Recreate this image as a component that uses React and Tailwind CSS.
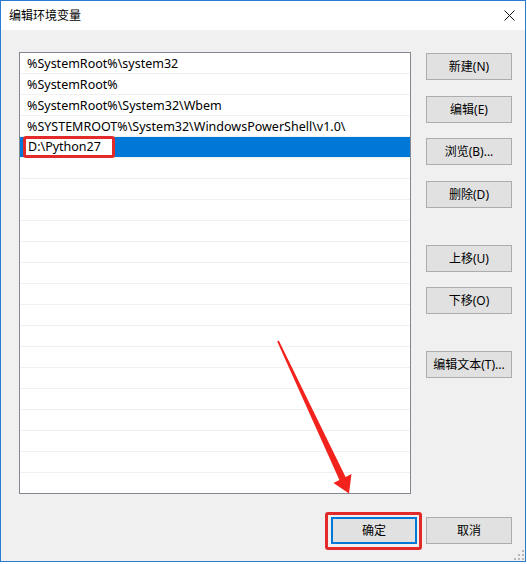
import React from 'react';

const paths = [
  '%SystemRoot%\\system32',
  '%SystemRoot%',
  '%SystemRoot%\\System32\\Wbem',
  '%SYSTEMROOT%\\System32\\WindowsPowerShell\\v1.0\\',
];

const sideButtons = [
  { label: '新建(N)', mt: 'mt-[1px]' },
  { label: '编辑(E)', mt: 'mt-[16px]' },
  { label: '浏览(B)...', mt: 'mt-[15px]' },
  { label: '删除(D)', mt: 'mt-[16px]' },
  { label: '上移(U)', mt: 'mt-[37px]' },
  { label: '下移(O)', mt: 'mt-[15px]' },
  { label: '编辑文本(T)...', mt: 'mt-[37px]' },
];

const WinButton = ({ children, className = '' }) => (
  <button className={`w-[86px] h-[27px] border border-[#adadad] bg-[#e1e1e1] text-[12px] text-black flex items-center justify-center ${className}`}>
    {children}
  </button>
);

const App = () => {
  // 21 rows fill the list box, the rest are empty
  const empty = Array.from({ length: 17 });

  return (
    <div
      className="w-[527px] h-[564px] bg-white overflow-hidden relative"
      style={{ fontFamily: '"Noto Sans", "Noto Sans CJK SC", sans-serif' }}
    >
      <div className="w-[526px] h-[562px] border border-[#2b7bd0] flex flex-col">
        {/* title bar */}
        <div className="h-[29px] bg-white flex items-center justify-between pl-[8px] pr-[10px] shrink-0">
          <span className="text-[12px] text-black">编辑环境变量</span>
          <svg width="11" height="11" viewBox="0 0 11 11" className="mt-[-1px]">
            <path d="M0.5 0.5 L10.5 10.5 M10.5 0.5 L0.5 10.5" stroke="#111" strokeWidth="1" />
          </svg>
        </div>

        {/* body */}
        <div className="flex-1 bg-[#f0f0f0] pt-[22px] pl-[18px] pr-[13px] relative">
          <div className="flex gap-[15px]">
            <div className="w-[392px] h-[442px] border border-[#828790] bg-white overflow-hidden">
              {paths.map((p) => (
                <div key={p} className="h-[21px] border-b border-[#f0f0f0] flex items-center pl-[7px] pt-[2px] text-[12.5px] text-black">
                  {p}
                </div>
              ))}
              <div className="h-[21px] border-b border-[#f0f0f0] bg-[#0078d7] flex items-center">
                <div className="ml-[3px] w-[92px] h-[22px] mt-[-1px] bg-white border-[3px] border-[#e32a2a] rounded-[3px] flex items-center pl-[2px] pt-[2px] text-[12.5px] text-black">
                  D:\Python27
                </div>
              </div>
              {empty.map((_, i) => (
                <div key={i} className="h-[21px] border-b border-[#f0f0f0]" />
              ))}
            </div>

            <div className="flex flex-col">
              {sideButtons.map((b) => (
                <WinButton key={b.label} className={b.mt}>
                  {b.label}
                </WinButton>
              ))}
            </div>
          </div>

          <div className="flex justify-end gap-[9px] mt-[23px]">
            <div className="relative">
              <button className="w-[86px] h-[27px] border-2 border-[#0078d7] bg-[#e1e1e1] text-[12px] text-black flex items-center justify-center">
                确定
              </button>
              <span className="absolute left-[-6px] right-[-5px] top-[-5px] bottom-[-6px] border-[3px] border-[#e32a2a] rounded-[3px] pointer-events-none" />
            </div>
            <WinButton>取消</WinButton>
          </div>

          {/* resize grip */}
          <svg className="absolute right-[1px] bottom-[1px]" width="10" height="10" viewBox="0 0 10 10">
            <g fill="#b8b8b8">
              <rect x="8" y="0" width="2" height="2" />
              <rect x="4" y="4" width="2" height="2" />
              <rect x="8" y="4" width="2" height="2" />
              <rect x="0" y="8" width="2" height="2" />
              <rect x="4" y="8" width="2" height="2" />
              <rect x="8" y="8" width="2" height="2" />
            </g>
          </svg>
        </div>
      </div>

      {/* red annotation arrow */}
      <svg className="absolute left-0 top-0 pointer-events-none" width="527" height="564">
        <polygon
          points="277.2,341.4 278.8,340.6 345.6,477 351.5,474 349,493.5 333.5,483 339.4,480"
          fill="#f2231d"
        />
      </svg>
    </div>
  );
};

export default App;
